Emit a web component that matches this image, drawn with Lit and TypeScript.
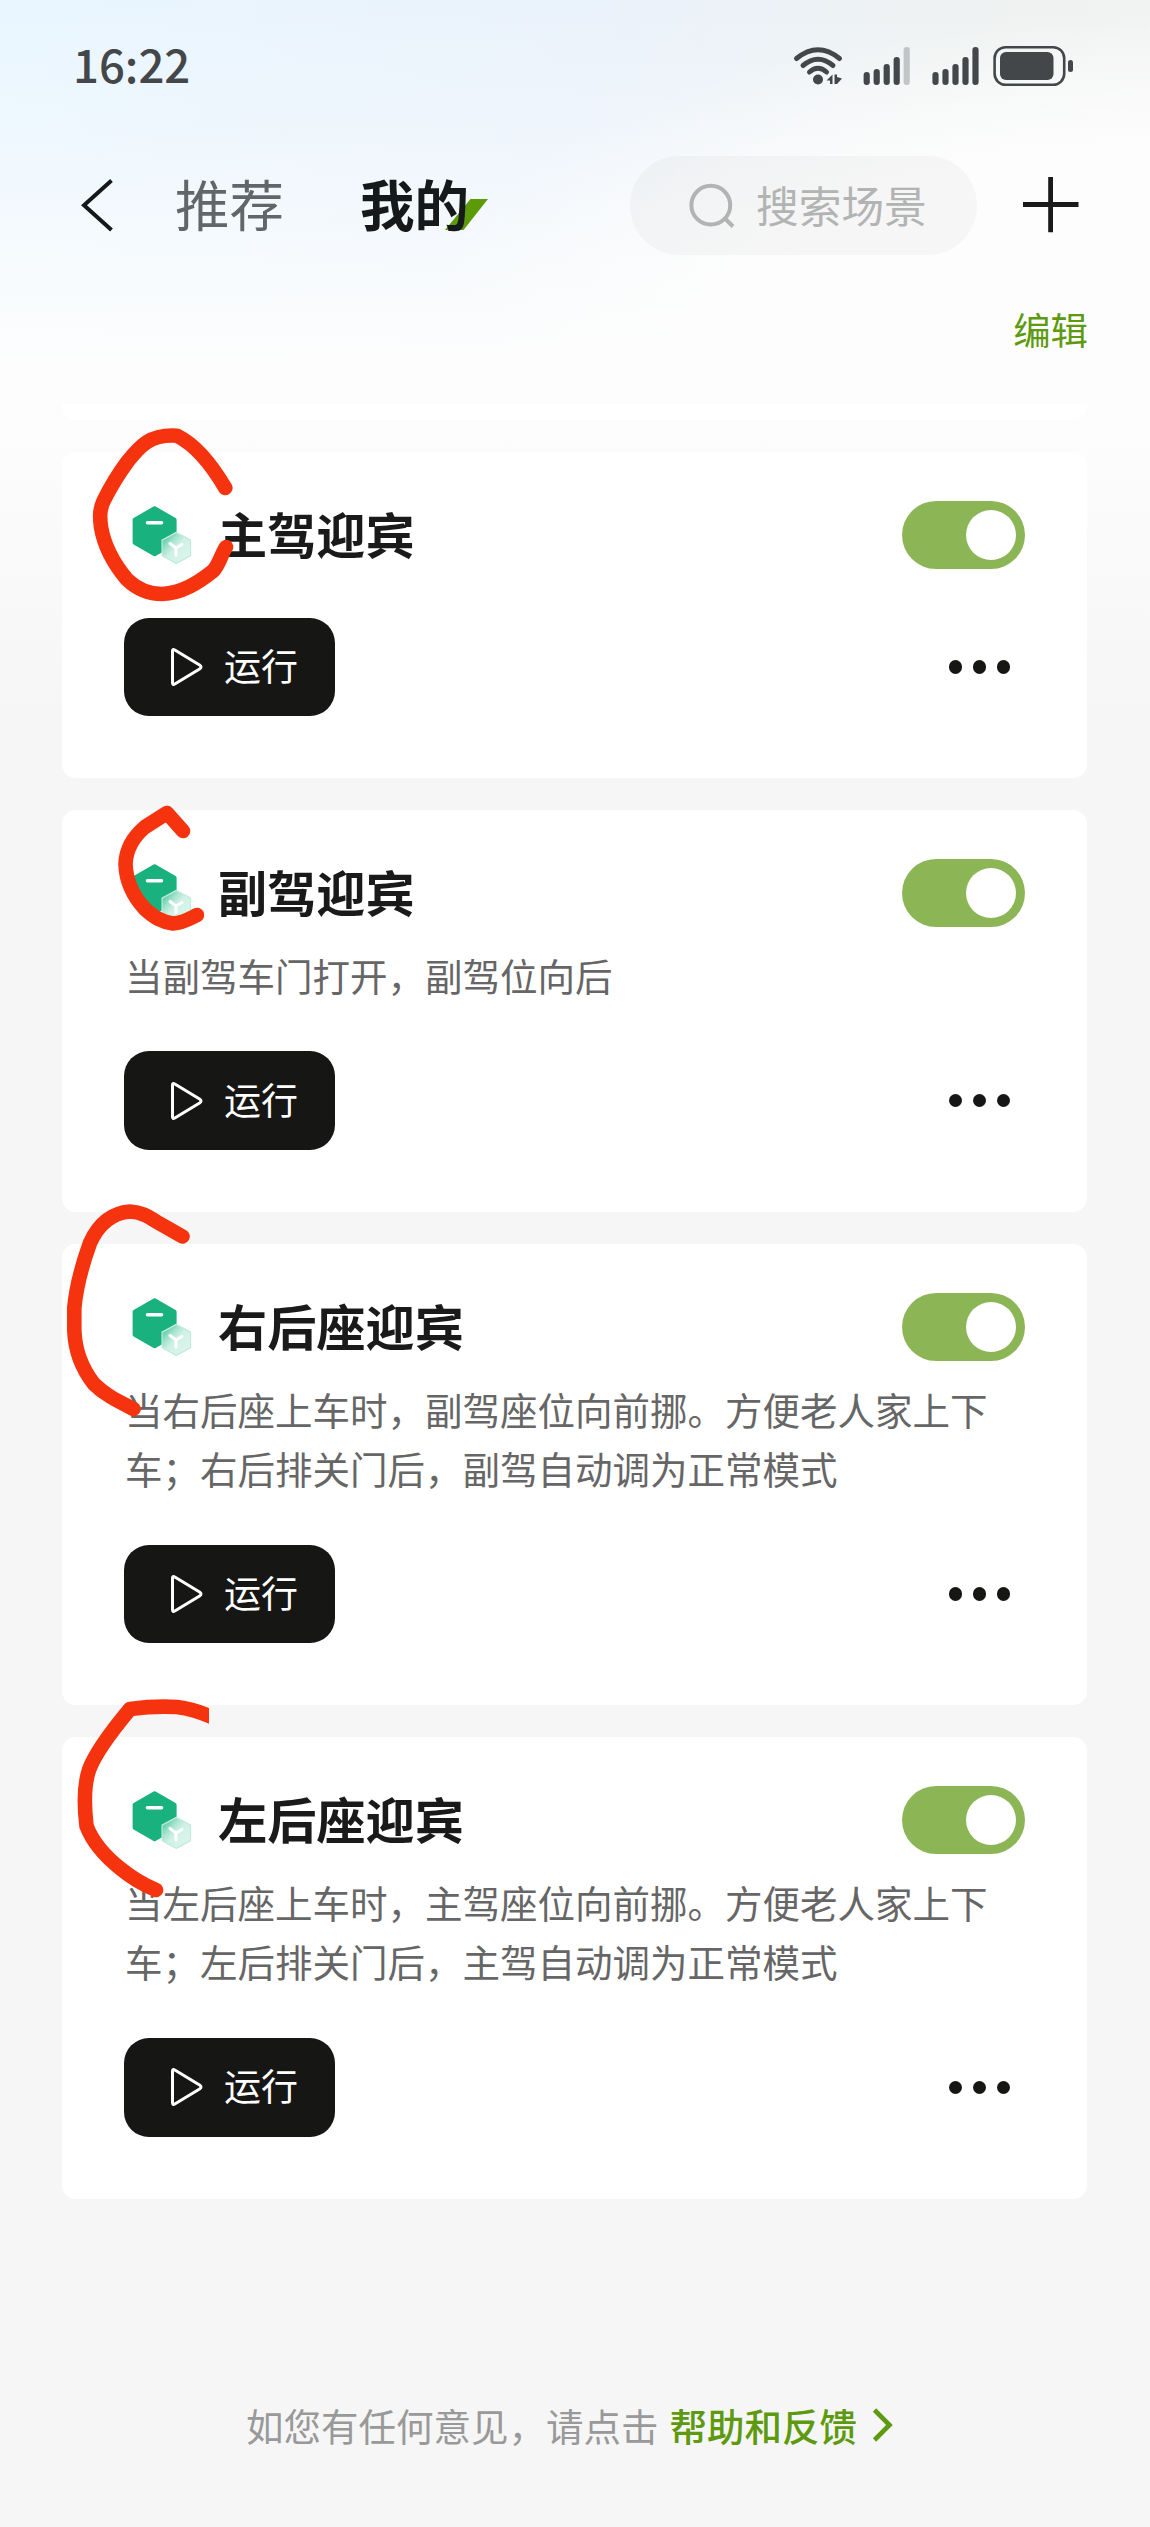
import { LitElement, html, css, svg } from "lit";
import { customElement, property } from "lit/decorators.js";

const hex = (cx: number, cy: number, w: number, h: number) =>
  `M${cx} ${cy - h / 2}L${cx + w / 2} ${cy - h / 4}V${cy + h / 4}L${cx} ${cy + h / 2}L${cx - w / 2} ${cy + h / 4}V${cy - h / 4}Z`;

@customElement("scene-card")
class SceneCard extends LitElement {
  @property() name = "";
  @property() desc = "";

  static styles = css`
    :host {
      display: block;
      background: #fff;
      border-radius: 14px;
      padding: 49px 62px 62px;
    }
    .head {
      display: flex;
      align-items: center;
      height: 68px;
    }
    .icon {
      flex: none;
      width: 96px;
      height: 68px;
    }
    .title {
      flex: 1;
      margin-left: -2px;
      padding-bottom: 5px;
      font-size: 49.2px;
      line-height: 63px;
      font-weight: 700;
      color: #1a1a1a;
      white-space: nowrap;
    }
    .toggle {
      box-sizing: border-box;
      display: flex;
      justify-content: flex-end;
      width: 123px;
      height: 68px;
      padding: 9px;
      border-radius: 34px;
      background: #8cb655;
    }
    .knob {
      width: 50px;
      height: 50px;
      border-radius: 50%;
      background: #fff;
    }
    .desc {
      margin: 18px 0 -2px;
      padding-left: 1px;
      font-size: 37.5px;
      line-height: 59.5px;
      color: #666;
    }
    .foot {
      display: flex;
      justify-content: space-between;
      align-items: center;
      margin-top: 49px;
    }
    .run {
      box-sizing: border-box;
      display: flex;
      align-items: center;
      width: 211px;
      height: 98.7px;
      padding-left: 45px;
      gap: 21px;
      border-radius: 25px;
      background: #161614;
      color: #fff;
      font-size: 37px;
      line-height: 46px;
    }
    .run span {
      padding-bottom: 4px;
    }
    .play {
      width: 34px;
      height: 40px;
    }
    .dots {
      display: flex;
      gap: 10.4px;
      padding-right: 15px;
    }
    .dot {
      width: 13.5px;
      height: 13.5px;
      border-radius: 50%;
      background: #161614;
    }
  `;

  render() {
    return html`
      <div class="head">
        <svg class="icon" viewBox="124 501 96 68">
          <defs>
            <linearGradient id="glass" x1="0" y1="0" x2="1" y2="1">
              <stop offset="0.08" stop-color="#45c69b" />
              <stop offset="0.32" stop-color="#a5e3cd" />
              <stop offset="0.5" stop-color="#d0f1e5" />
              <stop offset="1" stop-color="#e0f7ee" />
            </linearGradient>
          </defs>
          <path d=${hex(154.6, 531.2, 40, 46)} fill="#19b17e" stroke="#19b17e" stroke-width="4" stroke-linejoin="round" />
          <path d="M147.5 522.8H161.5" stroke="#fff" stroke-width="3.6" stroke-linecap="round" />
          <path d=${hex(176.3, 547.9, 28.5, 31)} fill="url(#glass)" stroke="#c2ebdd" stroke-width="1.2" stroke-linejoin="round" />
          <path d="M170 543.5L176 548L182 544.5M176 548V555" fill="none" stroke="#fff" stroke-width="3" stroke-linecap="round" />
        </svg>
        <div class="title">${this.name}</div>
        <div class="toggle"><div class="knob"></div></div>
      </div>
      ${this.desc ? html`<div class="desc">${this.desc}</div>` : ""}
      <div class="foot">
        <div class="run">
          <svg class="play" viewBox="0 0 34 40">
            <path d="M3.5 4.2Q3.5 1.8 5.8 3L31 18.3Q33 20 31 21.7L5.8 37Q3.5 38.2 3.5 35.8Z" fill="none" stroke="#fff" stroke-width="3" stroke-linejoin="round" />
          </svg>
          <span>运行</span>
        </div>
        <div class="dots"><i class="dot"></i><i class="dot"></i><i class="dot"></i></div>
      </div>
    `;
  }
}

const scenes = [
  { name: "主驾迎宾", desc: "" },
  { name: "副驾迎宾", desc: "当副驾车门打开，副驾位向后" },
  { name: "右后座迎宾", desc: "当右后座上车时，副驾座位向前挪。方便老人家上下车；右后排关门后，副驾自动调为正常模式" },
  { name: "左后座迎宾", desc: "当左后座上车时，主驾座位向前挪。方便老人家上下车；左后排关门后，主驾自动调为正常模式" },
];

const signal = (x: number, dimLast: boolean) =>
  [72, 69, 64, 57, 47].map(
    (top, i) => svg`<rect x=${x + i * 10} y=${top} width="6.2" height=${85 - top} rx="3" fill="#434749" opacity=${dimLast && i === 4 ? 0.28 : 1} />`
  );

@customElement("app-root")
class AppRoot extends LitElement {
  static styles = css`
    :host {
      display: block;
      position: relative;
      box-sizing: border-box;
      width: 1150px;
      height: 2527px;
      overflow: hidden;
      font-family: "Noto Sans CJK SC", sans-serif;
      background:
        radial-gradient(720px 270px at 1150px 290px, #fdfdfd 50%, rgba(253, 253, 253, 0) 100%) 0 0 / 100% 370px no-repeat,
        linear-gradient(to bottom, rgba(253, 254, 254, 0) 0, rgba(253, 254, 254, 0.25) 130px, #fdfdfd 370px, #fcfcfc 450px, #f6f6f6 710px),
        linear-gradient(100deg, #e9f6ff 0, #eaf2fb 50%, #eff2f2 78%, #f2f3f2 100%) 0 0 / 100% 370px no-repeat,
        #f6f6f6;
    }
    .status {
      display: flex;
      justify-content: space-between;
      height: 130px;
    }
    .time {
      padding-left: 73px;
      font-size: 45.5px;
      line-height: 127px;
      font-weight: 500;
      color: #434749;
    }
    .sysicons {
      width: 370px;
      height: 130px;
    }
    .nav {
      display: flex;
      align-items: center;
      height: 150px;
      padding-left: 78px;
    }
    .back {
      width: 40px;
      height: 60px;
      margin-right: 57px;
    }
    .tab {
      padding-bottom: 4px;
      font-size: 54.5px;
      line-height: 80px;
      color: #626669;
      white-space: nowrap;
    }
    .active {
      position: relative;
      margin-left: 76px;
      font-weight: 700;
      color: #16191a;
    }
    .label {
      position: relative;
    }
    .accent {
      position: absolute;
      left: 85px;
      top: 36px;
      width: 43px;
      height: 31px;
    }
    .search {
      box-sizing: border-box;
      display: flex;
      align-items: center;
      gap: 20px;
      width: 347px;
      height: 99px;
      margin-left: 161px;
      padding-left: 58px;
      border-radius: 50px;
      background: rgba(60, 60, 60, 0.035);
      font-size: 42.7px;
      line-height: 60px;
      color: #b2b4b4;
      white-space: nowrap;
    }
    .search span {
      padding-bottom: 3px;
    }
    .lens {
      flex: none;
      width: 48px;
      height: 48px;
    }
    .plus {
      width: 60px;
      height: 60px;
      margin-left: 44px;
    }
    .toolbar {
      display: flex;
      justify-content: flex-end;
      height: 124px;
      padding-right: 62px;
      font-size: 37.4px;
      line-height: 99px;
      color: #5d9a10;
    }
    .list {
      display: flex;
      flex-direction: column;
      gap: 31.6px;
      padding: 0 63px 0 62px;
    }
    .tail {
      height: 16px;
      background: #fff;
      border-radius: 0 0 14px 14px;
    }
    .help {
      display: flex;
      align-items: center;
      margin-top: 196px;
      padding-left: 246px;
      font-size: 37.5px;
      line-height: 60px;
      color: #999;
    }
    .link {
      margin-left: 11px;
      font-weight: 500;
      color: #5d9a10;
    }
    .chev {
      width: 24px;
      height: 36px;
      margin-left: 13px;
    }
    .ink {
      position: absolute;
      left: 0;
      top: 0;
      width: 1150px;
      height: 2527px;
      pointer-events: none;
    }
  `;

  render() {
    return html`
      <div class="status">
        <div class="time">16:22</div>
        <svg class="sysicons" viewBox="780 0 370 130">
          <g fill="none" stroke="#434749" stroke-width="5" stroke-linecap="round">
            <path d="M796.5 58.5Q818 41 839.5 58.5" />
            <path d="M803 65.5Q818 53 833 65.5" />
            <path d="M809.5 72Q818 64.5 826.5 72" />
          </g>
          <circle cx="818" cy="79.5" r="5" fill="#434749" />
          <path d="M826.5 80.5L832.5 74.5V84H830V80.5ZM834.5 74.5H837V77L842 78.5L837 84H834.5Z" fill="#434749" />
          ${signal(863.6, true)} ${signal(932.4, false)}
          <rect x="994.6" y="47.2" width="69.6" height="37.6" rx="11" fill="none" stroke="#434749" stroke-width="2.6" />
          <rect x="1000" y="52" width="53.5" height="28" rx="6" fill="#434749" />
          <rect x="1068" y="60" width="5" height="12" rx="2.5" fill="#434749" />
        </svg>
      </div>
      <div class="nav">
        <svg class="back" viewBox="78 175 40 60">
          <path d="M111.5 180.5L84 205.3L111.5 230" fill="none" stroke="#16191a" stroke-width="4" />
        </svg>
        <div class="tab">推荐</div>
        <div class="tab active">
          <svg class="accent" viewBox="0 0 43 31"><path d="M25.5 0H43L18.5 31H0Z" fill="#5c9a08" /></svg>
          <span class="label">我的</span>
        </div>
        <div class="search">
          <svg class="lens" viewBox="688 180 48 48" fill="none" stroke="#b2b4b4" stroke-width="4">
            <circle cx="710.8" cy="204.2" r="19.4" />
            <path d="M725 217.5L733 225.5" />
          </svg>
          <span>搜索场景</span>
        </div>
        <svg class="plus" viewBox="1021 175 60 60">
          <path d="M1023 204.5H1078.5M1050.6 177V232.3" stroke="#1a1a1a" stroke-width="4.8" />
        </svg>
      </div>
      <div class="toolbar"><span>编辑</span></div>
      <div class="list">
        <div class="tail"></div>
        ${scenes.map((s) => html`<scene-card .name=${s.name} .desc=${s.desc}></scene-card>`)}
      </div>
      <div class="help">
        <span>如您有任何意见，请点击</span>
        <span class="link">帮助和反馈</span>
        <svg class="chev" viewBox="0 0 24 36"><path d="M4.5 3L19.5 18L4.5 33" fill="none" stroke="#5d9a10" stroke-width="4.6" /></svg>
      </div>
      <svg class="ink" viewBox="0 0 1150 2527" fill="none" stroke="#f5330f" stroke-width="14.6" stroke-linecap="round" stroke-linejoin="round">
        <clipPath id="cut"><rect x="0" y="1600" width="209" height="400" /></clipPath>
        <path d="M225.3 488C213 467 198 446 177 435.7C150 434 140 446 128 461C119 473 111 486 103.5 501C99 511 100 519 101 527C104 545 114 564 127 579.5C137 589 150 594 162 594C182 593 198 583 213 571C219 565 221 555 226 547" />
        <path d="M183 831L167 813L145 827C132 838 126 850 125.5 864C126 880 133 896 145 909C155 918 162 922 173 923.5C183 923 189 919 197 915" />
        <path d="M182.5 1236.5L157 1222C148 1216 141 1212 130 1211.5C111 1213 98 1225 90 1243C81 1268 76 1289 74.3 1308V1330C75 1352 83 1370 94 1384C105 1395 118 1401 133.5 1409" />
        <path clip-path="url(#cut)" d="M222 1721C208 1716 200 1710 177 1707C160 1706 145 1707 130 1709C110 1733 95 1753 89 1770C84 1785 84 1805 86.5 1826C93 1843 107 1858 121 1869C132 1878 144 1885 156 1890" />
      </svg>
    `;
  }
}
